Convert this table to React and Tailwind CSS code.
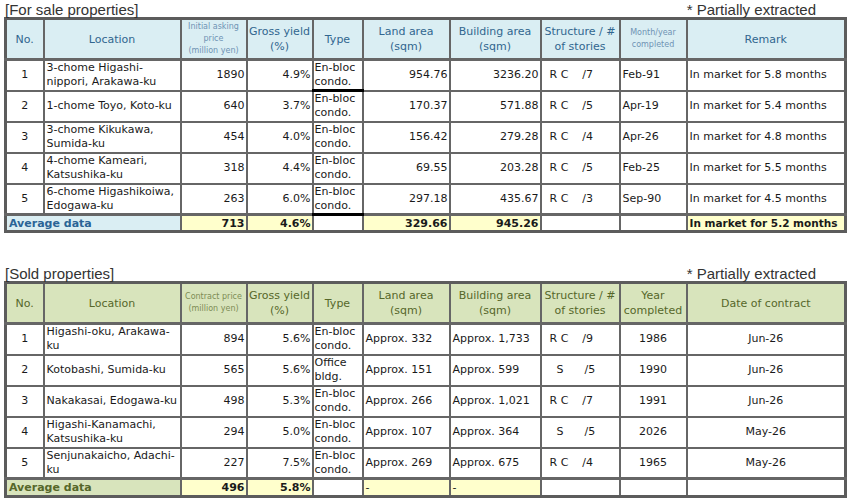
import React from "react";

const W = [38, 137, 66, 66, 50, 87, 91, 79, 67, 159];

const sale = [
  ["1", "3-chome Higashi-nippori, Arakawa-ku", "1890", "4.9%", "954.76", "3236.20", "R C    /7", "Feb-91", "In market for 5.8 months"],
  ["2", "1-chome Toyo, Koto-ku", "640", "3.7%", "170.37", "571.88", "R C    /5", "Apr-19", "In market for 5.4 months"],
  ["3", "3-chome Kikukawa, Sumida-ku", "454", "4.0%", "156.42", "279.28", "R C    /4", "Apr-26", "In market for 4.8 months"],
  ["4", "4-chome Kameari, Katsushika-ku", "318", "4.4%", "69.55", "203.28", "R C    /5", "Feb-25", "In market for 5.5 months"],
  ["5", "6-chome Higashikoiwa, Edogawa-ku", "263", "6.0%", "297.18", "435.67", "R C    /3", "Sep-90", "In market for 4.5 months"],
];

const sold = [
  ["1", "Higashi-oku, Arakawa-ku", "894", "5.6%", "En-bloc condo.", "Approx. 332", "Approx. 1,733", "R C    /9", "1986", "Jun-26"],
  ["2", "Kotobashi, Sumida-ku", "565", "5.6%", "Office bldg.", "Approx. 151", "Approx. 599", "  S      /5", "1990", "Jun-26"],
  ["3", "Nakakasai, Edogawa-ku", "498", "5.3%", "En-bloc condo.", "Approx. 266", "Approx. 1,021", "R C    /7", "1991", "Jun-26"],
  ["4", "Higashi-Kanamachi, Katsushika-ku", "294", "5.0%", "En-bloc condo.", "Approx. 107", "Approx. 364", "  S      /5", "2026", "May-26"],
  ["5", "Senjunakaicho, Adachi-ku", "227", "7.5%", "En-bloc condo.", "Approx. 269", "Approx. 675", "R C    /4", "1965", "May-26"],
];

const td = "border-2 border-[#666666] p-0 align-middle";

function Cols() {
  return (
    <colgroup>
      {W.map((w, i) => (
        <col key={i} style={{ width: w }} />
      ))}
    </colgroup>
  );
}

function Title({ children }) {
  return (
    <div className="flex items-end justify-between h-[16px] pl-[5px] pr-[34px] text-[15px] leading-[15px] text-[#333333] font-['Liberation_Sans',sans-serif]">
      <span>{children}</span>
      <span>* Partially extracted</span>
    </div>
  );
}

function HeadRow({ bg, color, small, cells }) {
  return (
    <tr className={`h-[41px] ${bg}`}>
      {cells.map((c, i) => (
        <td
          key={i}
          className={`${td} border-b-[3px] text-center whitespace-nowrap ${c.small ? `text-[8px] leading-[12px] ${small}` : `text-[11px] leading-[15px] ${color}`}`}
        >
          {c.lines.map((l, j) => (
            <div key={j}>{l}</div>
          ))}
        </td>
      ))}
    </tr>
  );
}

function TypeCell({ text, blackBottom }) {
  const [a, b] = text.split(" ");
  return (
    <td className={`${td} ${blackBottom ? "border-b-[3px] border-b-black" : ""} text-left pl-[1px] leading-[14px]`}>
      <div>{a}</div>
      <div>{b}</div>
    </td>
  );
}

export default function App() {
  const saleHead = [
    { lines: ["No."] },
    { lines: ["Location"] },
    { lines: ["Initial asking", "price", "(million yen)"], small: true },
    { lines: ["Gross yield", "(%)"] },
    { lines: ["Type"] },
    { lines: ["Land area", "(sqm)"] },
    { lines: ["Building area", "(sqm)"] },
    { lines: ["Structure / #", "of stories"] },
    { lines: ["Month/year", "completed"], small: true },
    { lines: ["Remark"] },
  ];
  const soldHead = [
    { lines: ["No."] },
    { lines: ["Location"] },
    { lines: ["Contract price", "(million yen)"], small: true },
    { lines: ["Gross yield", "(%)"] },
    { lines: ["Type"] },
    { lines: ["Land area", "(sqm)"] },
    { lines: ["Building area", "(sqm)"] },
    { lines: ["Structure / #", "of stories"] },
    { lines: ["Year", "completed"] },
    { lines: ["Date of contract"] },
  ];

  return (
    <div className="w-[850px] h-[501px] overflow-hidden bg-white text-[#1a1a1a] font-['DejaVu_Sans',sans-serif] text-[11px] pt-[1px]">
      <Title>[For sale properties]</Title>
      <div className="px-[4px]">
        <table className="table-fixed border-collapse w-[841px] border-[3px] border-[#5c5c5c]">
          <Cols />
          <tbody>
            <HeadRow bg="bg-[#daeef3]" color="text-[#31668f]" small="text-[#6f93b3]" cells={saleHead} />
            {sale.map((r, i) => (
              <tr key={i} className="h-[31px]">
                <td className={`${td} text-center`}>{r[0]}</td>
                <td className={`${td} text-left pl-[2px] leading-[14px]`}>{r[1]}</td>
                <td className={`${td} text-right pr-[1px]`}>{r[2]}</td>
                <td className={`${td} text-right pr-[1px]`}>{r[3]}</td>
                <TypeCell text="En-bloc condo." blackBottom={i === 0 || i === 4} />
                <td className={`${td} text-right pr-[1px]`}>{r[4]}</td>
                <td className={`${td} text-right pr-[1px]`}>{r[5]}</td>
                <td className={`${td} text-left pl-[8px] whitespace-pre`}>{r[6]}</td>
                <td className={`${td} text-left pl-[2px]`}>{r[7]}</td>
                <td className={`${td} text-left pl-[2px] whitespace-nowrap`}>{r[8]}</td>
              </tr>
            ))}
            <tr className="h-[17px] font-bold leading-[13px]">
              <td colSpan={2} className={`${td} border-t-[3px] bg-[#daeef3] text-[#2a6496] text-left pl-[2px]`}>Average data</td>
              <td className={`${td} border-t-[3px] bg-[#ffffcc] text-right pr-[1px]`}>713</td>
              <td className={`${td} border-t-[3px] bg-[#ffffcc] text-right pr-[1px]`}>4.6%</td>
              <td className={`${td} border-t-[3px] border-t-black bg-white`}></td>
              <td className={`${td} border-t-[3px] bg-[#ffffcc] text-right pr-[1px]`}>329.66</td>
              <td className={`${td} border-t-[3px] bg-[#ffffcc] text-right pr-[1px]`}>945.26</td>
              <td className={`${td} border-t-[3px] bg-white`}></td>
              <td className={`${td} border-t-[3px] bg-white`}></td>
              <td className={`${td} border-t-[3px] bg-[#ffffcc] text-left pl-[2px] whitespace-nowrap text-[10.5px]`}>In market for 5.2 months</td>
            </tr>
          </tbody>
        </table>
      </div>

      <div className="h-[32px]" />
      <Title>[Sold properties]</Title>
      <div className="px-[4px]">
        <table className="table-fixed border-collapse w-[841px] border-[3px] border-[#5c5c5c]">
          <Cols />
          <tbody>
            <HeadRow bg="bg-[#d8e4bc]" color="text-[#56672a]" small="text-[#7d8c55]" cells={soldHead} />
            {sold.map((r, i) => (
              <tr key={i} className="h-[31px]">
                <td className={`${td} text-center`}>{r[0]}</td>
                <td className={`${td} text-left pl-[2px] leading-[14px]`}>{r[1]}</td>
                <td className={`${td} text-right pr-[1px]`}>{r[2]}</td>
                <td className={`${td} text-right pr-[1px]`}>{r[3]}</td>
                <TypeCell text={r[4]} />
                <td className={`${td} text-left pl-[2px]`}>{r[5]}</td>
                <td className={`${td} text-left pl-[2px]`}>{r[6]}</td>
                <td className={`${td} text-left pl-[8px] whitespace-pre`}>{r[7]}</td>
                <td className={`${td} text-center`}>{r[8]}</td>
                <td className={`${td} text-center`}>{r[9]}</td>
              </tr>
            ))}
            <tr className="h-[18px] leading-[13px]">
              <td colSpan={2} className={`${td} border-t-[3px] bg-[#d8e4bc] text-[#56672a] font-bold text-left pl-[2px]`}>Average data</td>
              <td className={`${td} border-t-[3px] bg-[#ffffcc] font-bold text-right pr-[1px]`}>496</td>
              <td className={`${td} border-t-[3px] bg-[#ffffcc] font-bold text-right pr-[1px]`}>5.8%</td>
              <td className={`${td} border-t-[3px] bg-white`}></td>
              <td className={`${td} border-t-[3px] bg-[#ffffcc] text-left pl-[2px]`}>-</td>
              <td className={`${td} border-t-[3px] bg-[#ffffcc] text-left pl-[2px]`}>-</td>
              <td className={`${td} border-t-[3px] bg-white`}></td>
              <td className={`${td} border-t-[3px] bg-white`}></td>
              <td className={`${td} border-t-[3px] bg-white`}></td>
            </tr>
          </tbody>
        </table>
      </div>
    </div>
  );
}
